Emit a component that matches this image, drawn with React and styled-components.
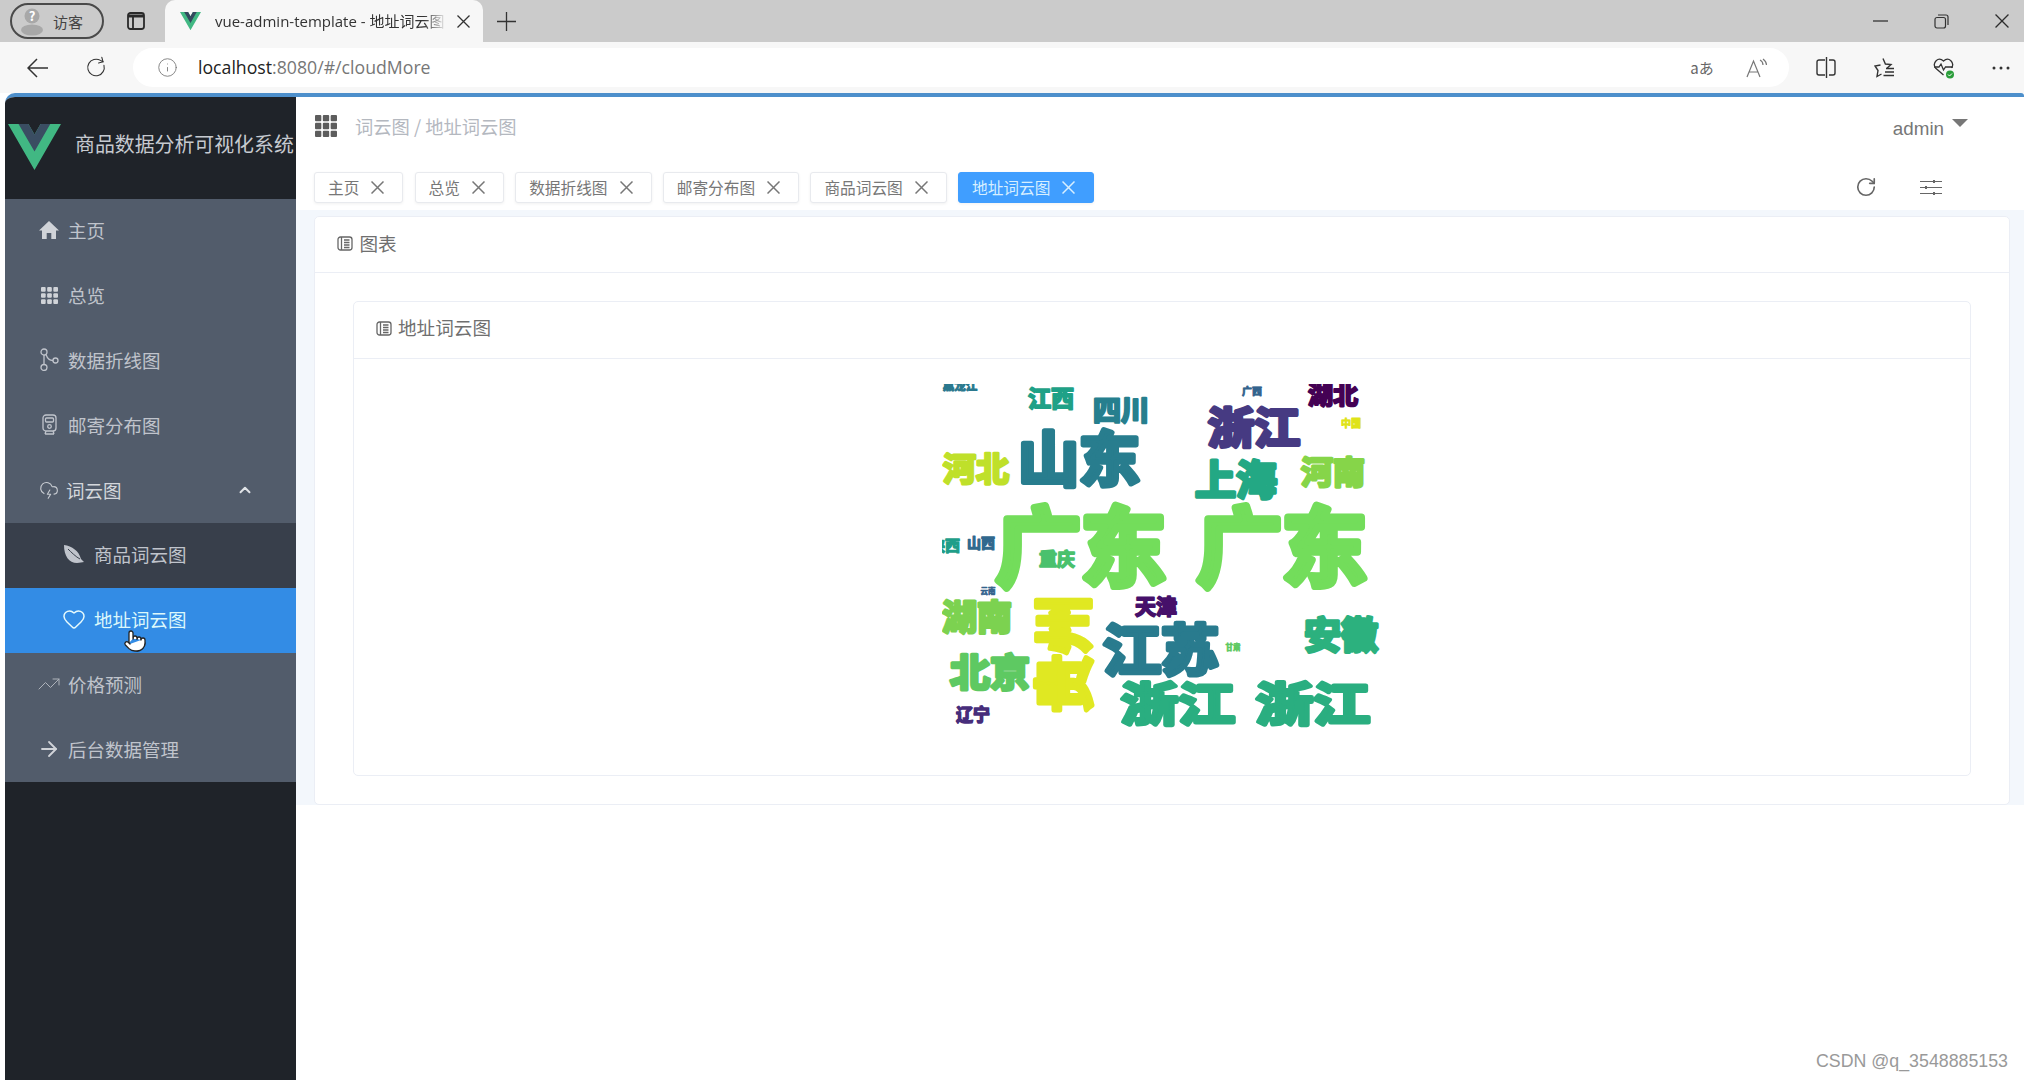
import styled, { createGlobalStyle } from 'styled-components';
import { ArrowRight, ChevronUp, CloudLightning, Heart, Info, Pointer, RotateCw, TrendingUp } from 'lucide-react';

const GlobalStyle = createGlobalStyle`
  html, body {
    margin: 0;
    padding: 0;
    background: #fff;
  }
  body {
    font-family: "Noto Sans CJK SC", "Liberation Sans", sans-serif;
  }
`;

const Page = styled.div`
  position: relative;
  width: 2024px;
  height: 1080px;
  overflow: hidden;
  background: #fff;
`;

/* browser chrome */
const TabStrip = styled.div`
  display: flex;
  align-items: center;
  height: 42px;
  padding-left: 10px;
  background: #cbcbcb;
  color: #2d2d2d;
`;

const GuestPill = styled.div`
  display: flex;
  align-items: center;
  gap: 9px;
  box-sizing: border-box;
  width: 94px;
  height: 36px;
  padding-left: 8px;
  border: 2px solid #4a4a4a;
  border-radius: 18px;
  font-size: 15px;
  color: #444;
`;

const ChromeIcon = styled.span`
  display: flex;
  align-items: center;
  justify-content: center;
  flex: none;
  width: ${(p) => p.$w || 20}px;
  margin-left: ${(p) => p.$ml || 0}px;
  color: ${(p) => p.$color || '#333'};
  white-space: nowrap;
  font-size: ${(p) => p.$fs || 16}px;
`;

const ActiveTab = styled.div`
  display: flex;
  align-items: center;
  flex: none;
  align-self: flex-end;
  box-sizing: border-box;
  width: 318px;
  height: 42px;
  margin-left: 20px;
  padding-left: 15px;
  border-radius: 10px 10px 0 0;
  background: #f7f7f7;
`;

const TabTitle = styled.span`
  width: 232px;
  margin: -2px 0 0 14px;
  overflow: hidden;
  white-space: nowrap;
  font-family: "Open Sans", "Noto Sans CJK SC", sans-serif;
  font-size: 15px;
  color: #333;
  mask-image: linear-gradient(to right, #000 90%, transparent);
`;

const WindowControls = styled.div`
  display: flex;
  align-items: center;
  gap: 46px;
  margin-left: auto;
  padding-right: 15px;
`;

const AddressRow = styled.div`
  display: flex;
  align-items: center;
  height: 51px;
  padding-left: 27px;
  background: #f7f7f7;
`;

const AddressPill = styled.div`
  display: flex;
  align-items: center;
  flex: none;
  box-sizing: border-box;
  width: 1656px;
  height: 39px;
  margin-left: 26px;
  padding-left: 24px;
  border-radius: 20px;
  background: #fff;
`;

const Url = styled.span`
  margin: -2px 0 0 20px;
  font-family: "Open Sans", sans-serif;
  font-size: 17.7px;
  color: #222;
  & > em {
    font-style: normal;
    color: #777;
  }
`;

const PillTools = styled.div`
  display: flex;
  align-items: center;
  gap: 32px;
  margin-left: auto;
  padding-right: 21px;
`;

const ToolIcons = styled.div`
  display: flex;
  align-items: center;
  gap: 38px;
  margin-left: 27px;
`;

/* admin frame */
const Frame = styled.div`
  display: flex;
  height: 987px;
  margin-left: 5px;
  border-top: 4px solid #4d8fcb;
  border-radius: 10px 3px 0 0;
  overflow: hidden;
`;

const Sidebar = styled.aside`
  display: flex;
  flex-direction: column;
  flex: none;
  width: 291px;
  background: #1f2329;
`;

const Brand = styled.div`
  display: flex;
  align-items: center;
  box-sizing: border-box;
  height: 102px;
  padding: 0 0 2px 3px;
`;

const BrandName = styled.span`
  margin: -8px 0 0 14px;
  white-space: nowrap;
  font-size: 19.9px;
  color: #c6cad0;
`;

const Nav = styled.nav`
  display: flex;
  flex-direction: column;
  background: #525c6b;
`;

const NavItem = styled.a`
  display: flex;
  align-items: center;
  position: relative;
  box-sizing: border-box;
  height: 64.8px;
  padding-left: ${(p) => (p.$sub ? 57 : 32)}px;
  padding-bottom: 2px;
  gap: ${(p) => p.$gap ?? 7}px;
  font-size: 18.5px;
  background: ${(p) => (p.$active ? '#338ce5' : p.$sub ? '#383f4b' : 'transparent')};
  color: ${(p) => (p.$active ? '#dcf8fb' : p.$open ? '#d4d7dc' : '#c0c4cc')};
`;

const NavIcon = styled.span`
  display: flex;
  align-items: center;
  justify-content: center;
  flex: none;
  width: 24px;
`;

const Chevron = styled.span`
  display: flex;
  margin-left: 109px;
`;

const HandCursor = styled.span`
  position: absolute;
  left: 118px;
  top: 41px;
  display: flex;
`;

const Main = styled.main`
  flex: 1;
  min-width: 0;
  display: flex;
  flex-direction: column;
`;

const TopBar = styled.header`
  display: flex;
  align-items: center;
  flex: none;
  box-sizing: border-box;
  height: 63px;
  padding: 0 44px 6px 19px;
  background: #fff;
`;

const Breadcrumb = styled.div`
  margin-left: 18px;
  font-size: 18.3px;
  color: #b4b8bf;
`;

const UserMenu = styled.div`
  display: flex;
  align-items: flex-start;
  margin: 6px 12px 0 auto;
  font-family: "Liberation Sans", sans-serif;
  font-size: 18.8px;
  color: #777;
`;

const Caret = styled.i`
  width: 0;
  height: 0;
  margin: 1px 0 0 8px;
  border-left: 8px solid transparent;
  border-right: 8px solid transparent;
  border-top: 8px solid #777;
`;

const TagsBar = styled.div`
  display: flex;
  align-items: center;
  flex: none;
  gap: 11.2px;
  height: 46px;
  margin-top: 4px;
  padding-left: 18px;
  background: #fff;
`;

const Tag = styled.span`
  display: flex;
  align-items: center;
  gap: 12px;
  box-sizing: border-box;
  height: 31px;
  padding: 0 18px 0 13px;
  border: 1px solid ${(p) => (p.$active ? '#409eff' : '#e8eaee')};
  border-radius: 3px;
  font-size: 15.7px;
  background: ${(p) => (p.$active ? '#409eff' : '#fff')};
  color: ${(p) => (p.$active ? '#d7efff' : '#777')};
  box-shadow: 0 1px 3px rgba(0, 0, 0, 0.06);
`;

const TagTools = styled.div`
  display: flex;
  align-items: center;
  gap: 43px;
  margin-left: auto;
  padding-right: 82px;
  color: #666;
`;

const Content = styled.div`
  flex: none;
  height: 595px;
  box-sizing: border-box;
  padding: 6px 14px 0 17.5px;
  background: #f3f7fc;
`;

const Card = styled.section`
  display: flex;
  flex-direction: column;
  box-sizing: border-box;
  height: ${(p) => (p.$inner ? '475px' : '100%')};
  border: 1px solid #ebeef5;
  border-radius: 5px;
  background: #fff;
`;

const CardHeader = styled.h3`
  display: flex;
  align-items: center;
  flex: none;
  gap: ${(p) => (p.$inner ? 6 : 7)}px;
  box-sizing: border-box;
  height: ${(p) => (p.$inner ? 57 : 56)}px;
  margin: 0;
  padding: 0 0 ${(p) => (p.$inner ? 8 : 5)}px 22px;
  border-bottom: 1px solid #ebeef5;
  font-size: 18.6px;
  font-weight: 400;
  color: #6f6f6f;
`;

const HeaderIcon = styled.span`
  display: flex;
  margin-top: ${(p) => (p.$inner ? 5 : 3)}px;
`;

const CardBody = styled.div`
  padding: 28px 38.5px;
`;

const CloudBody = styled.div`
  display: flex;
  justify-content: center;
  padding-top: 25px;
`;

const Watermark = styled.div`
  position: absolute;
  right: 16px;
  bottom: 8px;
  font-family: "Liberation Sans", sans-serif;
  font-size: 17.8px;
  color: #999;
`;

const VueLogo = ({ width, inner = '#34495e' }) => (
  <svg width={width} viewBox="0 0 262 227">
    <path fill="#41b883" d="M161 0l-30 52L101 0H0l131 227L262 0z" />
    <path fill={inner} d="M161 0l-30 52L101 0H52l79 136L209 0z" />
  </svg>
);

const Cross = ({ size = 13, width = 1.3 }) => (
  <svg width={size} height={size} viewBox="0 0 13 13" fill="none" stroke="currentColor" strokeWidth={width}>
    <path d="M.5.5l12 12M12.500.5l-12 12" />
  </svg>
);

const GridIcon = ({ size, color, gap = 1.5 }) => {
  const cell = (size - gap * 2) / 3;
  return (
    <svg width={size} height={size}>
      {[0, 1, 2].flatMap((r) =>
        [0, 1, 2].map((c) => (
          <rect key={`${r}${c}`} x={c * (cell + gap)} y={r * (cell + gap)} width={cell} height={cell} rx="1" fill={color} />
        ))
      )}
    </svg>
  );
};

const DocIcon = () => (
  <svg width="16" height="15" viewBox="0 0 16 15" fill="none" stroke="#666" strokeWidth="1.3">
    <rect x="1" y="1" width="14" height="13" rx="2.500" />
    <path d="M4.500 1v13M7 4h5.500M7 6.500h5.500M7 9h5.500M7 11.500h5.500" />
  </svg>
);

const navStroke = { fill: 'none', stroke: '#c0c4cc', strokeWidth: 1.3 };

const navIcons = {
  home: (
    <svg width="20" height="20" viewBox="0 0 20 20">
      <path fill="#d0d3d8" d="M10 1l10 9.500h-3V19h-4.700v-6H7.700v6H3v-8.500H0z" />
    </svg>
  ),
  grid: <GridIcon size={17} color="#d0d3d8" />,
  branch: (
    <svg width="19" height="23" viewBox="0 0 19 23" {...navStroke}>
      <circle cx="4" cy="4" r="3" />
      <circle cx="4" cy="19.500" r="3" />
      <circle cx="15.500" cy="12.500" r="2.500" />
      <path d="M4 7v9.500M6 6.500c1 3 3 6 7 6" />
    </svg>
  ),
  train: (
    <svg width="15" height="21" viewBox="0 0 15 21" {...navStroke}>
      <rect x="1" y="1" width="13" height="16" rx="3" />
      <rect x="3.500" y="4" width="8" height="4" rx="1" />
      <circle cx="7.500" cy="12.500" r="1.800" />
      <path d="M3 20h9M4 17l-1 3M11 17l1 3" />
    </svg>
  ),
  cloud: <CloudLightning size={20} color="#c8ccd2" strokeWidth={1.3} />,
  leaf: (
    <svg width="22" height="20" viewBox="0 0 22 20">
      <path fill="#c0c4cc" d="M1 1c0 11 5 18 13 18 3 0 5-1 7-1l-3-3C16 7 9 2 1 1z" />
      <path fill="none" stroke="#383f4b" d="M5 5c3 3 8 8 12 10" />
    </svg>
  ),
  heart: <Heart size={24} color="#e6fafc" strokeWidth={1.5} />,
  trend: <TrendingUp size={28} color="#aeb3bb" strokeWidth={1} />,
  arrow: <ArrowRight size={26} color="#d0d3d8" strokeWidth={1.800} />,
};

const menu = [
  { icon: 'home', label: '主页' },
  { icon: 'grid', label: '总览' },
  { icon: 'branch', label: '数据折线图' },
  { icon: 'train', label: '邮寄分布图' },
  { icon: 'cloud', label: '词云图', open: true },
  { icon: 'leaf', label: '商品词云图', sub: true },
  { icon: 'heart', label: '地址词云图', sub: true, active: true },
  { icon: 'trend', label: '价格预测' },
  { icon: 'arrow', label: '后台数据管理' },
];

const tags = ['主页', '总览', '数据折线图', '邮寄分布图', '商品词云图', '地址词云图'];

// 词云数据: text, cx, cy, font size, colour, vertical squash
const words = [
  ['广东', 139, 161, 85, '#73dd5b'],
  ['广东', 340, 161, 85, '#73dd5b'],
  ['山东', 137, 74, 61, '#287d8e', 0.96],
  ['浙江', 312, 43, 46, '#463a82', 0.92],
  ['江苏', 219, 264, 58, '#297b8e', 0.95],
  ['浙江', 236, 319, 57, '#2aae80', 0.8],
  ['浙江', 371, 319, 57, '#2aae80', 0.8],
  ['安徽', 399, 250, 37, '#2cb17e'],
  ['天津', 214, 222, 21, '#46106a'],
  ['北京', 48, 287, 40, '#5ec962', 0.95],
  ['湖南', 35, 232, 35, '#7cd250'],
  ['辽宁', 31, 330, 17, '#472d7b'],
  ['河北', 34, 84, 33, '#bfe02a'],
  ['上海', 294, 95, 41, '#23a884'],
  ['河南', 391, 87, 32, '#86d549'],
  ['江西', 109, 14, 23, '#1fa187'],
  ['四川', 179, 26, 28, '#267f8e'],
  ['湖北', 391, 10, 25, '#440154'],
  ['广西', 310, 7, 10, '#33638d'],
  ['中国', 409, 39, 10, '#dfe318'],
  ['黑龙江', 18, 1, 11.5, '#2a788e'],
  ['陕西', 3, 161, 15, '#1f9e89'],
  ['山西', 39, 159, 14, '#31688e'],
  ['重庆', 115, 175, 18, '#4ac16d'],
  ['云南', 46, 207, 7.5, '#33638d'],
  ['甘肃', 291, 263, 7.5, '#5ec962'],
];

const WordCloud = () => (
  <svg width="440" height="350" viewBox="0 0 440 350" fontFamily='"Noto Sans CJK SC", sans-serif' fontWeight="700" textAnchor="middle" dominantBaseline="central" strokeLinejoin="round" strokeLinecap="round">
    {words.map(([text, x, y, size, color, squash = 1]) => (
      <text key={text + x} transform={`translate(${x} ${y - size * 0.04}) scale(1 ${squash})`} fontSize={size} fill={color} stroke={color} strokeWidth={size * 0.09}>
        {text}
      </text>
    ))}
    <text transform="translate(118 270) rotate(-90)" fontSize="59" fill="#e0e822" stroke="#e0e822" strokeWidth="5">
      贵州
    </text>
  </svg>
);

export default function App() {
  return (
    <Page>
      <GlobalStyle />
      <TabStrip>
        <GuestPill>
          <svg width="24" height="30" viewBox="0 0 24 30">
            <circle cx="12" cy="10" r="7.500" fill="#a8a8a8" />
            <ellipse cx="12" cy="24" rx="11" ry="5.500" fill="#a8a8a8" />
            <text x="12" y="15" fontSize="13" fontWeight="700" fill="#fff" textAnchor="middle">?</text>
          </svg>
          访客
        </GuestPill>
        <ChromeIcon $w={18} $ml={23}>
          <svg width="18" height="18" viewBox="0 0 18 18" fill="none" stroke="#2a2a2a" strokeWidth="1.800">
            <rect x="1" y="1" width="16" height="16" rx="2.500" />
            <path d="M1 4h16" strokeWidth="3" />
            <path d="M6 4v13" />
          </svg>
        </ChromeIcon>
        <ActiveTab>
          <VueLogo width={21} />
          <TabTitle>vue-admin-template - 地址词云图</TabTitle>
          <ChromeIcon $w={14} $ml={9}>
            <Cross />
          </ChromeIcon>
        </ActiveTab>
        <ChromeIcon $w={19} $ml={14}>
          <svg width="19" height="19" viewBox="0 0 19 19" fill="none" stroke="#333" strokeWidth="1.300">
            <path d="M9.500 0v19M0 9.500h19" />
          </svg>
        </ChromeIcon>
        <WindowControls>
          <svg width="15" height="2" viewBox="0 0 15 2" stroke="#333" strokeWidth="1.300">
            <path d="M0 1h15" />
          </svg>
          <svg width="15" height="15" viewBox="0 0 15 15" fill="none" stroke="#333" strokeWidth="1.200">
            <rect x="1" y="3.500" width="10.500" height="10.500" rx="2" />
            <path d="M4 1h8a2 2 0 0 1 2 2v8" />
          </svg>
          <Cross size={14} width={1.200} />
        </WindowControls>
      </TabStrip>
      <AddressRow>
        <ChromeIcon $w={21}>
          <svg width="21" height="20" viewBox="0 0 21 20" fill="none" stroke="#333" strokeWidth="1.500">
            <path d="M21 10H1M10 1l-9 9 9 9" />
          </svg>
        </ChromeIcon>
        <ChromeIcon $w={22} $ml={37}>
          <RotateCw size={27} strokeWidth={1.200} style={{ transform: 'rotate(-15deg)' }} />
        </ChromeIcon>
        <AddressPill>
          <ChromeIcon $w={21} $color="#777">
            <Info size={25} strokeWidth={1} />
          </ChromeIcon>
          <Url>
            localhost<em>:8080/#/cloudMore</em>
          </Url>
          <PillTools>
            <ChromeIcon $w={24} $color="#666" $fs={15}>aあ</ChromeIcon>
            <ChromeIcon $w={22} $color="#666">
              <svg width="22" height="20" viewBox="0 0 22 20" fill="none" stroke="#777" strokeWidth="1.200">
                <path d="M1 19L7.500 3 14 19M3.500 14h8" />
                <path d="M14 2c2 1 3 3 3 5M17 1c2 1.500 3.500 3.500 3.500 6" />
              </svg>
            </ChromeIcon>
          </PillTools>
        </AddressPill>
        <ToolIcons>
          <svg width="20" height="21" viewBox="0 0 20 21" fill="none" stroke="#333" strokeWidth="1.400">
            <path d="M9 3H3a2 2 0 0 0-2 2v11a2 2 0 0 0 2 2h6M13 3h4a2 2 0 0 1 2 2v11a2 2 0 0 1-2 2h-4M10.500 0v21" />
          </svg>
          <svg width="21" height="21" viewBox="0 0 21 21" fill="none" stroke="#333" strokeWidth="1.400">
            <path d="M9 1.500l2.400 5.500 5.600.5-4 3.800M7.500 17l-4.500 2.500 1-6L1 9l5.500-1" />
            <path d="M12 11.500h8M11 15h9M9.500 18.500H20" />
          </svg>
          <svg width="21" height="22" viewBox="0 0 21 22" fill="none" stroke="#333" strokeWidth="1.300">
            <path d="M10.500 18L2.500 11C-1 6 5-1 10.500 4 16-1 22 6 18.500 11" />
            <path d="M1 10h5l2-3 2.500 6 2-3H20" />
            <circle cx="17" cy="17.500" r="4" fill="#2a9d3a" stroke="none" />
            <path d="M15 17.500l1.500 1.500 2.500-2.500" stroke="#fff" strokeWidth="1" />
          </svg>
          <svg width="18" height="4" viewBox="0 0 18 4">
            <circle cx="2" cy="2" r="1.500" fill="#333" />
            <circle cx="9" cy="2" r="1.500" fill="#333" />
            <circle cx="16" cy="2" r="1.500" fill="#333" />
          </svg>
        </ToolIcons>
      </AddressRow>
      <Frame>
        <Sidebar>
          <Brand>
            <VueLogo width={53} inner="#3a4d62" />
            <BrandName>商品数据分析可视化系统</BrandName>
          </Brand>
          <Nav>
            {menu.map((item) => (
              <NavItem key={item.label} $sub={item.sub} $active={item.active} $open={item.open} $gap={item.open ? 5 : item.sub ? 8 : 7}>
                <NavIcon>{navIcons[item.icon]}</NavIcon>
                {item.label}
                {item.open && (
                  <Chevron>
                    <ChevronUp size={18} color="#e0e3e7" strokeWidth={2.600} />
                  </Chevron>
                )}
                {item.active && (
                  <HandCursor>
                    <Pointer size={24} color="#222" fill="#fff" strokeWidth={1.300} />
                  </HandCursor>
                )}
              </NavItem>
            ))}
          </Nav>
        </Sidebar>
        <Main>
          <TopBar>
            <GridIcon size={22} color="#5d5d5d" />
            <Breadcrumb>词云图 / 地址词云图</Breadcrumb>
            <UserMenu>
              admin
              <Caret />
            </UserMenu>
          </TopBar>
          <TagsBar>
            {tags.map((tag, i) => (
              <Tag key={tag} $active={i === tags.length - 1}>
                {tag}
                <Cross size={13} width={1.500} />
              </Tag>
            ))}
            <TagTools>
              <RotateCw size={22} strokeWidth={1.800} />
              <svg width="22" height="17" viewBox="0 0 22 17" fill="none" stroke="#666" strokeWidth="1.200">
                <path d="M0 2.500h22M0 8.500h22M0 14.500h22" />
                <path d="M14 1v3M6 7v3M14 13v3" strokeWidth="2" />
              </svg>
            </TagTools>
          </TagsBar>
          <Content>
            <Card>
              <CardHeader>
                <HeaderIcon>
                  <DocIcon />
                </HeaderIcon>
                图表
              </CardHeader>
              <CardBody>
                <Card $inner>
                  <CardHeader $inner>
                    <HeaderIcon $inner>
                      <DocIcon />
                    </HeaderIcon>
                    地址词云图
                  </CardHeader>
                  <CloudBody>
                    <WordCloud />
                  </CloudBody>
                </Card>
              </CardBody>
            </Card>
          </Content>
        </Main>
      </Frame>
      <Watermark>CSDN @q_3548885153</Watermark>
    </Page>
  );
}
